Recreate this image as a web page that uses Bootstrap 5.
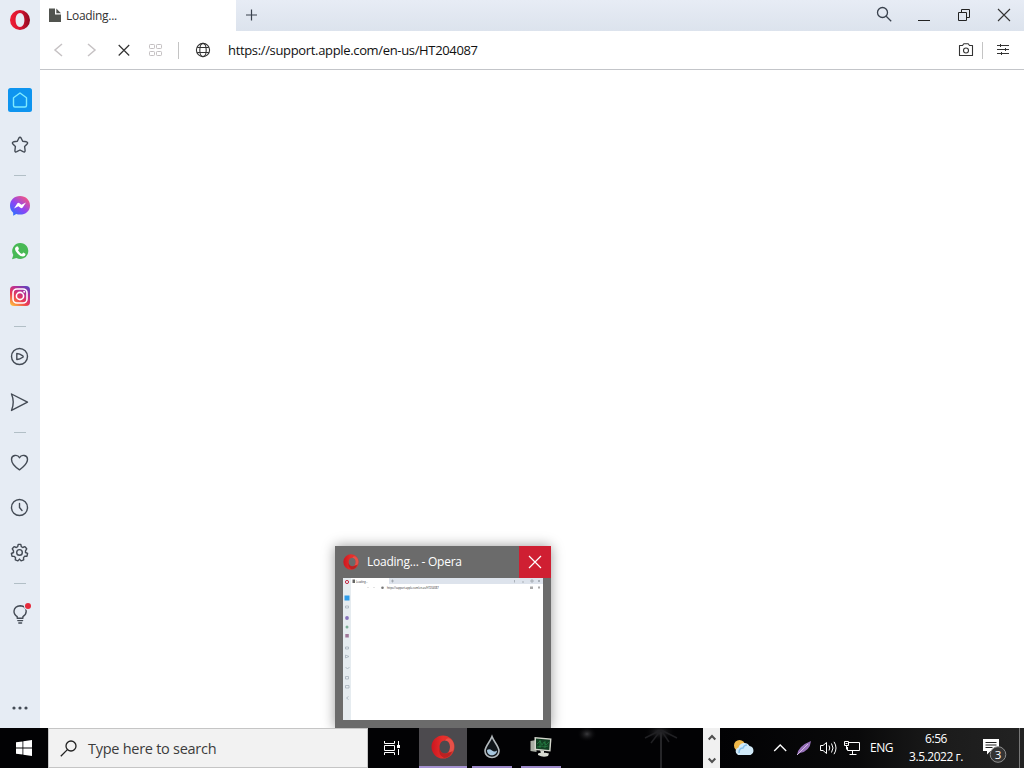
<!DOCTYPE html>
<html lang="en">
<head>
  <meta charset="UTF-8">
  <title>Loading... - Opera</title>
  <link href="https://cdn.jsdelivr.net/npm/bootstrap@5.3.3/dist/css/bootstrap.min.css" rel="stylesheet">
  <style>
    body {
      width: 1024px;
      height: 768px;
      overflow: hidden;
      font-family: "Open Sans", "Noto Sans", sans-serif;
      font-size: 12px;
      line-height: 16px;
      color: #333;
      background: #fff;
    }
    svg { display: block; flex: none; overflow: visible; }
    .stroked { fill: none; stroke: #444b55; stroke-width: 1.4; stroke-linejoin: round; stroke-linecap: round; }
    .browser { height: 728px; }

    /* sidebar */
    .side { width: 40px; background: #e6ecf4; }
    .side-logo { height: 78px; padding-top: 10px; }
    .side-item { height: 45px; padding-top: 10px; }
    .side-sep { height: 16px; padding-top: 7px; }
    .side-sep.tight { height: 15px; }
    .side-sep.low { padding-top: 8px; }
    .side-sep i { display: block; width: 12px; height: 1px; background: #b2bfc6; }
    .side-more { margin-bottom: 8px; }

    /* tab strip and address bar */
    .strip { height: 31px; background: linear-gradient(#e7ecf5, #dce3ed); }
    .tab-on { width: 196px; height: 31px; padding-left: 8px; background: #fff; }
    .tab-title { letter-spacing: -.3px; margin-left: 4px; }
    .tab-add { width: 31px; }
    .win-btn { width: 40px; height: 30px; }
    .address { height: 39px; border-bottom: 1px solid #c3c5c9; }
    .tool { width: 32px; }
    .rule { width: 1px; height: 17px; background: #c4c4c4; }
    .after-tools { margin-left: 6px; }
    .url-box { padding-left: 16px; }
    .menu-btn { margin: 0 13px 0 12px; }
    .url { font-size: 13px; letter-spacing: -.34px; color: #111; margin-left: 17px; white-space: nowrap; }

    /* taskbar */
    .taskbar { height: 40px; background: #020204; color: #fff; }
    .start { width: 48px; }
    .find { width: 320px; background: #f2f2f2; border: 1px solid #c5c5c5; color: #3c3c3c; font-size: 14.5px; padding-left: 11px; }
    .find span { margin: 2px 0 0 11px; letter-spacing: -.27px; }
    .task-view { width: 51px; padding-right: 3px; }
    .task { width: 48px; border-bottom: 2px solid #4b4b4d; }
    .task.current { background: #4c4a4e; border-color: #a491d0; }
    .task-run { width: 49px; }
    .task-run > div { width: 40px; height: 40px; border-bottom: 2px solid #9c89c9; }
    .wall { overflow: hidden; }
    .scroller { width: 17px; background: #f0f0f0; padding: 6px 0 4px; }
    .tray { width: 304px; background: linear-gradient(90deg, #020204, #09090a 45%, #1c1c1c 75%, #222); }
    .weather { margin-left: 10px; }
    .chevron { margin-left: 2px; }
    .net { margin-left: 7px; }
    .lang { width: 27px; margin-left: 10px; letter-spacing: -.5px; }
    .clock { width: 64px; margin-left: 7px; line-height: 18px; text-align: center; letter-spacing: -.45px; white-space: nowrap; }
    .notes { margin-left: 14px; }

    /* taskbar preview */
    .preview { left: 335px; top: 546px; width: 216px; height: 182px; background: #6b6b6b; color: #fff; box-shadow: 0 0 12px rgba(0,0,0,.4); clip-path: inset(-20px -20px 0 -20px); }
    .preview-head { height: 32px; padding-left: 8px; }
    .preview-head span { margin-left: 8px; letter-spacing: -.23px; }
    .preview-close { width: 32px; height: 32px; background: #cf1f32; }
    .preview-page { margin-left: 8px; }
  </style>
</head>
<body>
<svg width="0" height="0" class="position-absolute">
  <defs>
    <linearGradient id="ring" x1="0" x2="1"><stop offset="0" stop-color="#f01d35"/><stop offset=".55" stop-color="#d3132f"/><stop offset="1" stop-color="#8e0a20"/></linearGradient>
    <linearGradient id="ring3d" x1="0" x2="1"><stop offset="0" stop-color="#cc1620"/><stop offset=".5" stop-color="#e72f2b"/><stop offset="1" stop-color="#d2382f"/></linearGradient>
    <linearGradient id="msgr" x1="0" y1="1" x2=".8" y2="0"><stop offset="0" stop-color="#147cff"/><stop offset=".5" stop-color="#8b45f5"/><stop offset="1" stop-color="#f9567c"/></linearGradient>
    <linearGradient id="insta" x1=".1" y1="1" x2=".8" y2="0"><stop offset="0" stop-color="#ffc13d"/><stop offset=".4" stop-color="#ec3b50"/><stop offset=".7" stop-color="#bb2f92"/><stop offset="1" stop-color="#6143bd"/></linearGradient>
    <radialGradient id="glow"><stop offset="0" stop-color="#48484b"/><stop offset="1" stop-color="#020204" stop-opacity="0"/></radialGradient>
    <symbol id="opera3d" viewBox="0 0 24 24">
      <path fill="url(#ring3d)" fill-rule="evenodd" d="M12 .5a11.500 11.500 0 1 0 0 23 11.500 11.500 0 0 0 0-23zM14 5.500c3 0 5 2.800 5 6.500s-2 6.500-5 6.500-5.500-2.800-5.500-6.500 2.500-6.500 5.500-6.500z"/>
      <path fill="#f0635a" d="M14 5.500q5 .5 5 6.500 0 3-1.500 5 4 0 5-2 2-7-3-11-3-2-5.500 1.500z" opacity=".6"/>
      <path fill="#94131a" d="M8.500 13q.5 5 5.500 5.500 4 0 7-2-2 6.500-8 6.500-6-3-4.500-10z" opacity=".5"/>
    </symbol>
  </defs>
</svg>

<div class="browser d-flex">
  <nav class="side d-flex flex-column align-items-center">
    <div class="side-logo"><svg width="20" height="20" viewBox="0 0 20 20"><path fill="url(#ring)" fill-rule="evenodd" d="M10 0a10 10 0 1 0 0 20 10 10 0 0 0 0-20zM10 3c2.700 0 4.400 3 4.400 7s-1.700 7-4.400 7-4.400-3-4.400-7S7.300 3 10 3z"/></svg></div>
    <div class="side-item"><svg width="24" height="24"><rect width="24" height="24" rx="2.500" fill="#0e94ef"/><path d="M5.500 9.800 12 5l6.500 4.800v7.700q0 1.500-1.500 1.500H7q-1.500 0-1.500-1.500z" fill="none" stroke="#7eeaff" stroke-width="1.400" stroke-linejoin="round"/></svg></div>
    <div class="side-item"><svg class="stroked" width="24" height="24"><path d="M10.800 5.200q1.200-2 2.400 0l1.500 3 3.700.6q2 .6.700 2.200l-2.500 2.500.5 4q0 2-2 1.200L12 17l-3.200 1.700q-2 .8-1.900-1.200l.5-4L4.900 11q-1.300-1.600.7-2.200l3.700-.6z"/></svg></div>
    <div class="side-sep"><i></i></div>
    <div class="side-item"><svg width="24" height="24"><path fill="url(#msgr)" d="M12 2C6.200 2 2 6.200 2 11.700c0 3 1.200 5.300 3.200 7v3l3-1.600q1.800.5 3.800.5c5.800 0 10-4 10-9.200S17.800 2 12 2z"/><path fill="#fff" d="m6 14.600 3.200-5q1-1.300 2.300-.4l2 1.600 4.500-2.400-3.300 5q-1 1.300-2.300.4l-2-1.600z"/></svg></div>
    <div class="side-item"><svg width="24" height="24"><path fill="#48b955" d="M12.300 4a8 8 0 0 0-7 12L4 20.200l4.400-1.200A8 8 0 1 0 12.300 4z"/><path fill="#fff" d="M9 7.600h1l.9 2.200q.1.500-.9 1.500 1.500 2.700 4 3.600l1.200-1.300 2.200 1.100q.4 2.500-2.300 2.800-2.900 0-5.600-3Q5.900 10.600 7.500 8.500 8.200 7.600 9 7.600z"/></svg></div>
    <div class="side-item"><svg width="24" height="24"><rect x="2" y="2" width="20" height="20" rx="4" fill="url(#insta)"/><g fill="none" stroke="#fff" stroke-width="1.600"><rect x="5" y="5" width="14" height="14" rx="4"/><circle cx="12" cy="12" r="3.600"/></g><circle cx="16.200" cy="7.800" r="1" fill="#fff"/></svg></div>
    <div class="side-sep"><i></i></div>
    <div class="side-item"><svg class="stroked" width="24" height="24"><circle cx="11.500" cy="11.500" r="8"/><path d="M8.800 8.500v6q2.800.1 6-2.200.7-.6 0-1.400-3-2.400-6-2.400z"/></svg></div>
    <div class="side-item"><svg class="stroked" width="24" height="24"><path d="m3.500 4 16 8.200-16 8.200q3.500-8.200 0-16.400z"/></svg></div>
    <div class="side-sep tight"><i></i></div>
    <div class="side-item"><svg class="stroked" width="24" height="24"><path d="M11.500 19.800Q3.500 14.800 3.500 9.300c0-4 6-5.500 8-1.500 2-4 8-2.500 8 1.500 0 5.500-8 10.500-8 10.500z"/></svg></div>
    <div class="side-item"><svg class="stroked" width="24" height="24"><circle cx="11.500" cy="12.500" r="8"/><path d="M11.500 8.500v4l2.500 3"/></svg></div>
    <div class="side-item"><svg class="stroked" width="24" height="24"><g transform="translate(0 .4)"><path d="M9.700 6.300 10.200 4h2.600l.5 2.300 1.400.8 2.200-.9 1.800 2.200-1.200 2v1.700l2.100.9-.6 2.800-2.300.1-1.200 1.300.2 2.300-2.600 1-1.600-1.800-1.600 1.800-2.600-1 .2-2.300L6.300 16l-2.300-.2-.6-2.700 2.100-1v-1.700l-1.200-2 1.800-2.200 2.200.9z"/><circle cx="11.500" cy="12" r="2.800"/></g></svg></div>
    <div class="side-sep low"><i></i></div>
    <div class="side-item"><svg class="stroked" width="24" height="24"><path d="M9.200 17.200v-1.500Q5.800 13.500 6 10q.6-5 6.300-5.300Q18 5 18.200 10.300q0 3.500-3.300 5.400v1.500zM9.800 19.600h4.800M10.800 22h2.800"/><circle cx="20" cy="5" r="4" fill="#e6ecf4" stroke="none"/><circle cx="20" cy="5" r="3" fill="#e52b3c" stroke="none"/></svg></div>
    <div class="side-more mt-auto"><svg width="24" height="24" fill="#444b55"><circle cx="6" cy="12" r="1.600"/><circle cx="12" cy="12" r="1.600"/><circle cx="18" cy="12" r="1.600"/></svg></div>
  </nav>

  <main class="flex-grow-1">
    <div class="strip d-flex">
      <div class="tab-on d-flex align-items-center">
        <svg width="14" height="16"><path fill="#51544f" d="M1 .5h6v6h6V14H1z"/><path fill="#51544f" d="M8.300.5 13 5.300H8.300z"/></svg>
        <span class="tab-title">Loading...</span>
      </div>
      <div class="tab-add d-flex align-items-center justify-content-center"><svg width="13" height="13"><path d="M6.500.5v11M1 6h11" stroke="#39414d" stroke-width="1.200"/></svg></div>
      <div class="ms-auto d-flex">
        <div class="win-btn d-flex align-items-center justify-content-center"><svg width="16" height="16" fill="none" stroke="#39414d" stroke-width="1.300"><circle cx="6.500" cy="5.500" r="5"/><path d="m10.200 9.200 5 5"/></svg></div>
        <div class="win-btn d-flex align-items-center justify-content-center"><svg width="12" height="12"><path d="M0 11.500h12" stroke="#222"/></svg></div>
        <div class="win-btn d-flex align-items-center justify-content-center"><svg width="12" height="12" fill="none" stroke="#222"><path d="M.5 3.500h8v8h-8zM3.500 3V.5h8v8H9"/></svg></div>
        <div class="win-btn d-flex align-items-center justify-content-center"><svg width="12" height="12"><path d="m0 0 12 12M12 0 0 12" stroke="#333" stroke-width="1.100"/></svg></div>
      </div>
    </div>
    <div class="address d-flex align-items-center">
      <div class="d-flex ps-1">
        <div class="tool d-flex justify-content-center"><svg width="16" height="16"><path d="m10 2-7 6 7 6" fill="none" stroke="#c6c2c4" stroke-width="1.500"/></svg></div>
        <div class="tool d-flex justify-content-center"><svg width="16" height="16"><path d="m4 2 7 6-7 6" fill="none" stroke="#c6c2c4" stroke-width="1.500"/></svg></div>
        <div class="tool d-flex justify-content-center"><svg width="16" height="16"><path d="m2.700 3 10.500 10.500M13.200 3 2.700 13.500" stroke="#333" stroke-width="1.200"/></svg></div>
        <div class="tool d-flex justify-content-center"><svg width="16" height="16" fill="none" stroke="#c3bfc1"><rect x="1.500" y="2.500" width="5" height="4" rx=".8"/><rect x="8.500" y="2.500" width="5" height="4" rx=".8"/><rect x="1.500" y="9.500" width="5" height="4" rx=".8"/><rect x="8.500" y="9.500" width="5" height="4" rx=".8"/></svg></div>
      </div>
      <div class="rule after-tools"></div>
      <div class="url-box d-flex align-items-center flex-grow-1">
        <svg width="16" height="16" fill="none" stroke="#333" stroke-width="1.100"><circle cx="8" cy="8" r="6.600"/><ellipse cx="8" cy="8" rx="3.200" ry="6.600"/><path d="M2.200 5.500h11.600M2.200 10.500h11.600"/></svg>
        <span class="url">https://support.apple.com/en-us/HT204087</span>
      </div>
      <svg width="16" height="16" fill="none" stroke="#333" stroke-width="1.100"><path d="M1.500 3.500h3L5.800 1.700h4.400l1.300 1.800h3v10h-13z" stroke-linejoin="round"/><circle cx="8" cy="8.500" r="2.500"/></svg>
      <div class="rule ms-2"></div>
      <svg class="menu-btn" width="16" height="16"><path d="M2 3.500h12M2 7.500h12M2 11.500h12M5.500 2v3M10.500 6v3M6.500 10v3" stroke="#333"/></svg>
    </div>
  </main>
</div>

<footer class="taskbar d-flex">
  <div class="start d-flex align-items-center justify-content-center"><svg width="16" height="16" fill="#fff"><path d="M0 2.300 6.500 1.400v6.200H0zM7.300 1.300 16 0v7.600H7.300zM0 8.400h6.500v6.200L0 13.700zM7.300 8.400H16V16l-8.700-1.300z"/></svg></div>
  <div class="find d-flex align-items-center">
    <svg width="17" height="17" fill="none" stroke="#222" stroke-width="1.300"><circle cx="11" cy="6" r="5"/><path d="M7.400 9.600.8 16.200"/></svg>
    <span>Type here to search</span>
  </div>
  <div class="task-view d-flex align-items-center justify-content-center"><svg width="16" height="16" fill="none" stroke="#fff"><path d="M.5 1v2.500h10V1M.5 15v-2.500h10V15M.5 5.500h10v5H.5zM14.500 1v4M14.500 9v6"/><path d="M13 5h3v3h-3z" fill="#fff" stroke="none"/></svg></div>
  <div class="task current d-flex align-items-center justify-content-center"><svg width="24" height="24"><use href="#opera3d"/></svg></div>
  <div class="task-run d-flex justify-content-center">
    <div class="d-flex align-items-center justify-content-center"><svg width="18" height="24"><path d="M9 1.500C7 7 2 11.500 2 16a7 6.500 0 0 0 14 0C16 11.500 11 7 9 1.500z" fill="#10151a" stroke="#b3b9bd" stroke-width="1.600"/><path d="M4 15q2.500-1.500 5 .5t5 0c0 6-10 7-10-.5z" fill="#a7c6de"/></svg></div>
  </div>
  <div class="task-run d-flex justify-content-center">
    <div class="d-flex align-items-center justify-content-center"><svg width="24" height="24"><path fill="#a9ada4" d="m1.500 6 6-1v12l-6-1z"/><path fill="#d3d6cc" d="m5.500 2 17 1.500-1 13-16-1.500z"/><path fill="#123f23" d="m7 3.500 14 1.200-.8 10.300L7 13.700z"/><path d="m8 9 3-3 2 4 2-3 2 3 3-3M8 12l5-1 2 1 4-1M11 5v8M16 6v7" fill="none" stroke="#2d9650" stroke-width=".7" opacity=".8"/><path fill="#d9dcd3" d="m11 15 4 1v2h-3zM9 18.500q4-2 11 0l-1 2.500q-5 2-10-1z"/></svg></div>
  </div>
  <div class="flex-grow-1 d-flex">
    <svg class="wall" width="138" height="40">
      <ellipse cx="22" cy="6" rx="10" ry="8" fill="url(#glow)" opacity=".8"/>
      <ellipse cx="95" cy="4" rx="16" ry="9" fill="url(#glow)" opacity=".7"/>
      <path d="M96 3v37" stroke="#252528" stroke-width="2"/>
      <path d="m96 2-16 8M96 2l16 8M96 2 86 15M96 2l8 12" stroke="#202023" stroke-width="1.500"/>
    </svg>
  </div>
  <div class="scroller d-flex flex-column align-items-center justify-content-between">
    <svg width="8" height="7"><path d="m.7 5.500 3.300-3.500 3.300 3.500" fill="none" stroke="#505050" stroke-width="2"/></svg>
    <svg width="8" height="7"><path d="m.7 1.500 3.300 3.500 3.300-3.500" fill="none" stroke="#505050" stroke-width="2"/></svg>
  </div>
  <div class="tray d-flex align-items-center">
    <svg class="weather" width="40" height="20"><circle cx="9.500" cy="7.500" r="5.500" fill="#f0b849"/><path fill="#d0e9f8" d="M8 17a4 4 0 0 1 .5-7.500 6 6 0 0 1 11-1.500 4.700 4.700 0 0 1 1 9z"/><path d="M9 15q0-5 4-5 1-3 4-3" fill="none" stroke="#86c0ea" stroke-width="1.500"/></svg>
    <svg class="chevron" width="16" height="16"><path d="m2.200 11 6-6 6 6" fill="none" stroke="#fff" stroke-width="1.300"/></svg>
    <svg class="ms-2" width="16" height="16"><path fill="#9872bb" d="M1 15Q2 6 15 1q-1 10-11 12z"/><path d="M1 15 12 4" stroke="#d6bce5"/></svg>
    <svg class="ms-2" width="17" height="16" fill="none" stroke="#fff"><path d="M.5 5.500H3l3.500-3v11l-3.500-3H.5zM9 5.500q1.500 2.500 0 5M11.500 3.500q3 4.500 0 9M14 1.800q4 6.200 0 12.400"/></svg>
    <svg class="net" width="16" height="16" fill="none" stroke="#fff"><path d="M5 2.500h10.500v8H3.500V7M8.500 11v3M5.500 14.500h7"/><path d="M.5 1.500h4v4h-4zM1.500 3.500h2M2.500 5.500v4"/></svg>
    <div class="lang">ENG</div>
    <div class="clock">6:56<br>3.5.2022 г.</div>
    <svg class="notes" width="26" height="28"><path fill="#fff" d="M1 5h16v12H8.500L5 20.500V17H1z"/><path d="M3.500 8.500h11M3.500 11h11M3.500 13.500h7" stroke="#222"/><circle cx="16" cy="20.500" r="7.800" fill="#343434" stroke="#8f8f8f"/><text x="16" y="24.700" font-size="11.500" text-anchor="middle" fill="#fff">3</text></svg>
    <svg class="ms-auto" width="5" height="40"><path d="M.5 0v40" stroke="#777"/></svg>
  </div>
</footer>

<div class="preview position-absolute">
  <div class="preview-head d-flex align-items-center">
    <svg width="16" height="16"><use href="#opera3d"/></svg>
    <span>Loading... - Opera</span>
    <div class="preview-close ms-auto d-flex align-items-center justify-content-center"><svg width="12" height="12"><path d="m0 0 12 12M12 0 0 12" stroke="#fff" stroke-width="1.200"/></svg></div>
  </div>
  <svg class="preview-page" width="200" height="142">
    <path fill="#fff" d="M0 0h200v142H0z"/>
    <path fill="#e6ecf0" d="M0 0h8v142H0z"/>
    <path fill="#dde3ec" d="M46 0h154v6H46z"/>
    <circle cx="4" cy="4" r="1.600" fill="none" stroke="#c32c47"/>
    <path fill="#666" d="M9.500 1.500h2.500v3.500H9.500z"/>
    <text x="13" y="4.800" font-size="2.600" fill="#333">Loading...</text>
    <path d="M49.500 1.500v3M48 3h3M171.500 2v2.500M179 4h2M188 2h2v2h-2zM195 2l2 2M197 2l-2 2" stroke="#8a9099" stroke-width=".6" fill="none"/>
    <path d="M24 9.500h2M30 9.500h2" stroke="#ddd" stroke-width=".8"/>
    <circle cx="39.500" cy="9.700" r="1.300" fill="#777"/>
    <text x="44" y="10.800" font-size="2.550" fill="#222">https://support.apple.com/en-us/HT204087</text>
    <path d="M187 8.500h3v2.500h-3zM195 8.500h2v2h-2z" fill="#aaa"/>
    <path d="M1.500 17.500h5v5h-5z" fill="#2f9ce9"/>
    <g fill="none" stroke="#a6b1bb" stroke-width=".8"><path d="M2.500 28h3v2h-3zM2.500 69h3v2h-3zM2.500 77l3.500 1.500-3.500 1.500zM2.500 89l2 2 2-2M2.500 98.500h3v2.500h-3zM2.500 107.500h3.500v2.500H2.500zM5.500 118.500l-2 1.500 2 1.500"/></g>
    <circle cx="4" cy="40" r="1.900" fill="#8773bb"/><circle cx="4" cy="49" r="1.500" fill="#7cae97"/><path fill="#9f7798" d="M2.300 56h3.500v3.500H2.300z"/>
  </svg>
</div>
<script src="https://cdn.jsdelivr.net/npm/bootstrap@5.3.3/dist/js/bootstrap.bundle.min.js"></script>
</body>
</html>
